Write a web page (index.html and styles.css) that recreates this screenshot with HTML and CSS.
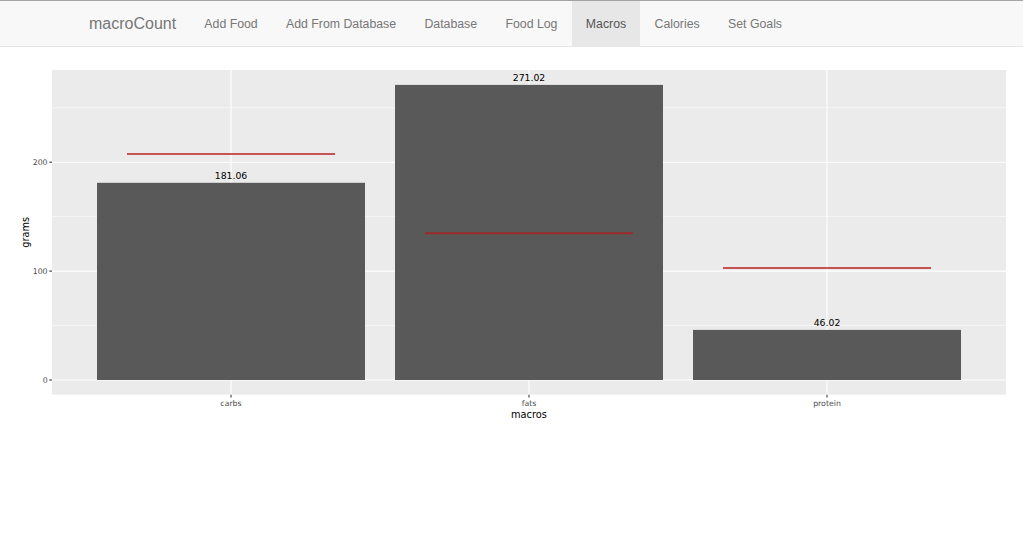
FILE: index.html
```html
<!DOCTYPE html>
<html>
<head>
<meta charset="utf-8">
<title>macroCount</title>
<link rel="stylesheet" href="styles.css">
</head>
<body>
<nav class="navbar">
  <a class="brand" href="#">macroCount</a>
  <ul class="nav">
    <li><a href="#">Add Food</a></li>
    <li><a href="#">Add From Database</a></li>
    <li><a href="#">Database</a></li>
    <li><a href="#">Food Log</a></li>
    <li class="active"><a href="#">Macros</a></li>
    <li><a href="#">Calories</a></li>
    <li><a href="#">Set Goals</a></li>
  </ul>
</nav>
<main class="content">
  <svg class="chart" width="1023" height="491" viewBox="0 47 1023 491" xmlns="http://www.w3.org/2000/svg">
    <rect class="panel" x="52" y="70" width="954" height="324.7"/>
    <g class="grid-minor">
      <line x1="52" x2="1006" y1="325.55" y2="325.55"/>
      <line x1="52" x2="1006" y1="216.65" y2="216.65"/>
      <line x1="52" x2="1006" y1="107.75" y2="107.75"/>
    </g>
    <g class="grid-major">
      <line x1="52" x2="1006" y1="380" y2="380"/>
      <line x1="52" x2="1006" y1="271.1" y2="271.1"/>
      <line x1="52" x2="1006" y1="162.2" y2="162.2"/>
      <line x1="231" x2="231" y1="70" y2="394.7"/>
      <line x1="529" x2="529" y1="70" y2="394.7"/>
      <line x1="827" x2="827" y1="70" y2="394.7"/>
    </g>
    <g class="bars">
      <rect x="97" y="182.8" width="268" height="197.2"/>
      <rect x="395" y="84.9" width="268" height="295.1"/>
      <rect x="693" y="329.9" width="268" height="50.1"/>
    </g>
    <g class="goals">
      <line x1="127" x2="335" y1="154" y2="154"/>
      <line x1="425" x2="633" y1="233.3" y2="233.3"/>
      <line x1="723" x2="931" y1="268" y2="268"/>
    </g>
    <g class="values">
      <text x="231" y="178.5">181.06</text>
      <text x="529" y="81">271.02</text>
      <text x="827" y="326">46.02</text>
    </g>
    <g class="ticks">
      <line x1="49.3" x2="52" y1="380" y2="380"/>
      <line x1="49.3" x2="52" y1="271.1" y2="271.1"/>
      <line x1="49.3" x2="52" y1="162.2" y2="162.2"/>
      <line x1="231" x2="231" y1="394.7" y2="397.4"/>
      <line x1="529" x2="529" y1="394.7" y2="397.4"/>
      <line x1="827" x2="827" y1="394.7" y2="397.4"/>
    </g>
    <g class="ylabels">
      <text x="47.6" y="382.8">0</text>
      <text x="47.6" y="273.9">100</text>
      <text x="47.6" y="165">200</text>
    </g>
    <g class="xlabels">
      <text x="231" y="405.5">carbs</text>
      <text x="529" y="405.5">fats</text>
      <text x="827" y="405.5">protein</text>
    </g>
    <text class="axis-title" x="529" y="418">macros</text>
    <text class="axis-title" x="28.7" y="232.3" transform="rotate(-90 28.7 232.3)">grams</text>
  </svg>
</main>
</body>
</html>
```

FILE: styles.css
```css
html, body {
  margin: 0;
  padding: 0;
  background: #fff;
}

body {
  font-family: "Liberation Sans", Arial, sans-serif;
  width: 1023px;
  overflow: hidden;
}

.navbar {
  display: flex;
  align-items: stretch;
  height: 45px;
  background: #f8f8f8;
  border-top: 1px solid #a3a3a3;
  border-bottom: 1px solid #e7e7e7;
  padding-left: 75px;
}

.brand {
  display: flex;
  align-items: center;
  padding: 1px 14px 0;
  font-size: 16px;
  color: #777;
  text-decoration: none;
}

.nav {
  display: flex;
  list-style: none;
  margin: 0;
  padding: 0;
}

.nav li {
  display: flex;
}

.nav a {
  display: flex;
  align-items: center;
  padding: 1px 14.2px 0;
  font-size: 12.3px;
  color: #777;
  text-decoration: none;
}

.nav .active a {
  background: #e7e7e7;
  color: #555;
}

.content {
  display: block;
}

.chart {
  display: block;
  font-family: "DejaVu Sans", sans-serif;
}

.panel {
  fill: #ebebeb;
}

.grid-minor line {
  stroke: #fff;
  stroke-width: 0.55;
}

.grid-major line {
  stroke: #fff;
  stroke-width: 1.07;
}

.bars rect {
  fill: #595959;
}

.goals line {
  stroke: rgb(185, 22, 22);
  stroke-opacity: 0.72;
  stroke-width: 2;
}

.values text {
  font-size: 9.3px;
  fill: #000;
  text-anchor: middle;
}

.ticks line {
  stroke: #333;
  stroke-width: 1.07;
}

.ylabels text {
  font-size: 7.8px;
  fill: #4d4d4d;
  text-anchor: end;
}

.xlabels text {
  font-size: 7.8px;
  fill: #4d4d4d;
  text-anchor: middle;
}

.axis-title {
  font-size: 9.8px;
  fill: #000;
  text-anchor: middle;
}
```
